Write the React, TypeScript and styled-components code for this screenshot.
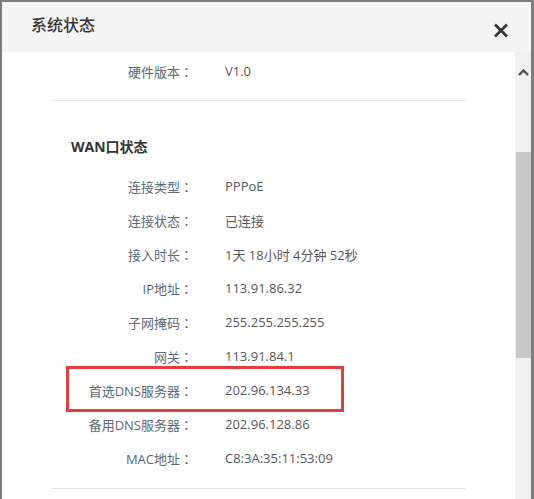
import React from 'react';
import styled, { createGlobalStyle } from 'styled-components';

const GlobalStyle = createGlobalStyle`
  html, body {
    margin: 0;
    padding: 0;
    height: 100%;
    overflow: hidden;
    background: #7d7d7d;
  }

  body {
    font-family: 'Open Sans', 'Noto Sans CJK SC', sans-serif;
  }
`;

const Modal = styled.div`
  display: flex;
  flex-direction: column;
  margin: 2px 3px 0 2px;
  height: 497px;
  background: #fff;
  overflow: hidden;
`;

const Header = styled.header`
  display: flex;
  align-items: center;
  justify-content: space-between;
  flex-shrink: 0;
  height: 50px;
  padding: 0 22px 0 29px;
  background: #f5f5f5;
`;

const Title = styled.h2`
  margin: 0 0 4px;
  color: #333;
  font-size: 16px;
  font-weight: 500;
  line-height: 1;
`;

const CloseButton = styled.button`
  display: flex;
  padding: 0;
  margin-top: 6px;
  border: 0;
  background: none;
  cursor: pointer;
`;

const Body = styled.div`
  display: flex;
  flex: 1;
  min-height: 0;
`;

const Content = styled.div`
  flex: 1;
  padding-top: 2px;
  overflow: hidden;
`;

const Row = styled.div<{ $highlighted?: boolean }>`
  position: relative;
  display: grid;
  grid-template-columns: 191px 1fr;
  column-gap: 32px;
  align-items: center;
  height: 34px;
  font-size: 13px;

  ${({ $highlighted }) =>
    $highlighted &&
    `
    &::after {
      content: '';
      position: absolute;
      left: 64px;
      top: -7px;
      width: 272px;
      height: 40px;
      border: 3px solid #e53c3c;
    }
  `}
`;

const Label = styled.span`
  color: #5b6a75;
  text-align: right;
  white-space: nowrap;
`;

// the centred full-width colon of the JP face matches the reference
const Colon = styled.span`
  font-family: 'Noto Sans CJK JP', sans-serif;
`;

const Value = styled.span`
  color: #585858;
  white-space: nowrap;
`;

const Divider = styled.hr<{ $top: number }>`
  margin: ${({ $top }) => $top}px 49px 0;
  border: 0;
  border-top: 1px solid #e4e4e4;
`;

const SectionTitle = styled.h3`
  margin: 36px 0 12px 69px;
  color: #333;
  font-size: 14px;
  font-weight: 700;
  line-height: 20px;
`;

const Scrollbar = styled.div`
  display: flex;
  flex-direction: column;
  align-items: center;
  width: 16px;
  flex-shrink: 0;
  background: #f1f1f1;
`;

const ScrollArrow = styled.div`
  display: flex;
  align-items: center;
  justify-content: center;
  height: 40px;
  padding-left: 1px;
`;

const Thumb = styled.div`
  width: 15px;
  height: 206px;
  margin-top: 60px;
  background: #c8c8c8;
`;

type Item = { label: string; value: string; highlighted?: boolean };

const wanItems: Item[] = [
  { label: '连接类型', value: 'PPPoE' },
  { label: '连接状态', value: '已连接' },
  { label: '接入时长', value: '1天 18小时 4分钟 52秒' },
  { label: 'IP地址', value: '113.91.86.32' },
  { label: '子网掩码', value: '255.255.255.255' },
  { label: '网关', value: '113.91.84.1' },
  { label: '首选DNS服务器', value: '202.96.134.33', highlighted: true },
  { label: '备用DNS服务器', value: '202.96.128.86' },
  { label: 'MAC地址', value: 'C8:3A:35:11:53:09' },
];

function InfoRow({ label, value, highlighted }: Item) {
  return (
    <Row $highlighted={highlighted}>
      <Label>
        {label}
        <Colon>：</Colon>
      </Label>
      <Value>{value}</Value>
    </Row>
  );
}

function SystemStatus() {
  return (
    <Modal>
      <Header>
        <Title>系统状态</Title>
        <CloseButton aria-label="关闭">
          <svg width="16" height="15" viewBox="0 0 16 15">
            <path
              d="M2 1.5 L14 13.5 M14 1.5 L2 13.5"
              stroke="#333"
              strokeWidth="2.6"
              fill="none"
            />
          </svg>
        </CloseButton>
      </Header>
      <Body>
        <Content>
          <InfoRow label="硬件版本" value="V1.0" />
          <Divider $top={12} />
          <SectionTitle>WAN口状态</SectionTitle>
          {wanItems.map((item) => (
            <InfoRow key={item.label} {...item} />
          ))}
          <Divider $top={13} />
        </Content>
        <Scrollbar>
          <ScrollArrow>
            <svg width="11" height="7" viewBox="0 0 11 7">
              <path d="M1 6 L5.5 1.5 L10 6" stroke="#505050" strokeWidth="2.4" fill="none" />
            </svg>
          </ScrollArrow>
          <Thumb />
        </Scrollbar>
      </Body>
    </Modal>
  );
}

export default function App() {
  return (
    <>
      <GlobalStyle />
      <SystemStatus />
    </>
  );
}
